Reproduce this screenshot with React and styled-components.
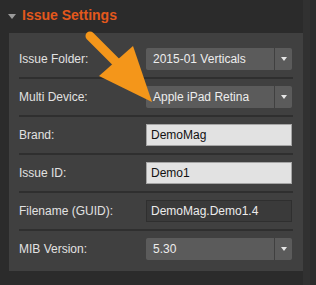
import React from 'react';
import styled, { createGlobalStyle } from 'styled-components';

const GlobalStyle = createGlobalStyle`
    html, body {
        margin: 0;
        padding: 0;
        background: #2b2b2b;
        font-family: "Liberation Sans", Arial, sans-serif;
    }
`

const Page = styled.div`
    position: relative;
    width: 316px;
    height: 285px;
    display: flex;
    overflow: hidden;
`

const Main = styled.div`
    width: 303px;
    display: flex;
    flex-direction: column;
`

const Track = styled.div`
    width: 7px;
    background: #313131;
`

const Header = styled.div`
    height: 33px;
    display: flex;
    align-items: center;
    gap: 6px;
    padding: 0 0 3px 8px;
    box-sizing: border-box;
`

const Caret = styled.div`
    width: 0;
    height: 0;
    border-left: 4px solid transparent;
    border-right: 4px solid transparent;
    border-top: 5px solid #9a9a9a;
    margin-top: 2px;
`

const Title = styled.h3`
    margin: 0;
    font-size: 14px;
    font-weight: bold;
    color: #e3581c;
`

const Panel = styled.div`
    margin-left: 9px;
    background: #404040;
    padding: 15px 11px 11px 10px;
    display: flex;
    flex-direction: column;
`

const Row = styled.div`
    display: flex;
    align-items: center;
    height: 22px;
`

const Separator = styled.div`
    height: 2px;
    margin: 7px -1px 7px 0;
    background: #2f2f2f;
`

const Label = styled.div`
    width: 127px;
    font-size: 12px;
    color: #e2e2e2;
`

const Select = styled.div`
    flex: 1;
    height: 22px;
    display: flex;
    gap: 1px;
`

const SelectValue = styled.div`
    flex: 1;
    background: #5b5b5b;
    border-radius: 2px 0 0 2px;
    color: #ededed;
    font-size: 12px;
    line-height: 22px;
    padding-left: 7px;
`

const SelectButton = styled.div`
    width: 17px;
    background: #5b5b5b;
    border-radius: 0 2px 2px 0;
    display: flex;
    align-items: center;
    justify-content: center;

    &::after {
        content: '';
        border-left: 3.5px solid transparent;
        border-right: 3.5px solid transparent;
        border-top: 4px solid #e6e6e6;
    }
`

const Field = styled.div`
    flex: 1;
    height: 22px;
    box-sizing: border-box;
    border: 1px solid ${p => p.$readOnly ? '#2f2f2f' : '#a5a5a5'};
    background: ${p => p.$readOnly ? '#3a3a3a' : '#e2e2e2'};
    color: ${p => p.$readOnly ? '#ececec' : '#111'};
    font-size: 12px;
    line-height: 20px;
    padding-left: 4px;
`

const Pointer = styled.svg`
    position: absolute;
    left: 0;
    top: 0;
    pointer-events: none;
`

const SelectControl = ({ value }) => (
    <Select>
        <SelectValue>{value}</SelectValue>
        <SelectButton />
    </Select>
)

const fields = [
    { label: 'Issue Folder:', type: 'select', value: '2015-01 Verticals' },
    { label: 'Multi Device:', type: 'select', value: 'Apple iPad Retina' },
    { label: 'Brand:', type: 'input', value: 'DemoMag' },
    { label: 'Issue ID:', type: 'input', value: 'Demo1' },
    { label: 'Filename (GUID):', type: 'readonly', value: 'DemoMag.Demo1.4' },
    { label: 'MIB Version:', type: 'select', value: '5.30' },
]

const App = () => {
    return (
        <Page>
            <GlobalStyle />
            <Main>
                <Header>
                    <Caret />
                    <Title>Issue Settings</Title>
                </Header>
                <Panel>
                    {fields.map((f, i) => (
                        <React.Fragment key={f.label}>
                            {i > 0 && <Separator />}
                            <Row>
                                <Label>{f.label}</Label>
                                {f.type === 'select'
                                    ? <SelectControl value={f.value} />
                                    : <Field $readOnly={f.type === 'readonly'}>{f.value}</Field>}
                            </Row>
                        </React.Fragment>
                    ))}
                </Panel>
            </Main>
            <Track />
            <Pointer width="316" height="285" viewBox="0 0 316 285">
                <line x1="90" y1="36" x2="122" y2="68" stroke="#f4961a" strokeWidth="9" strokeLinecap="round" />
                <polygon points="99,76 133,46 152,102" fill="#f4961a" />
            </Pointer>
        </Page>
    );
};

export default App;
